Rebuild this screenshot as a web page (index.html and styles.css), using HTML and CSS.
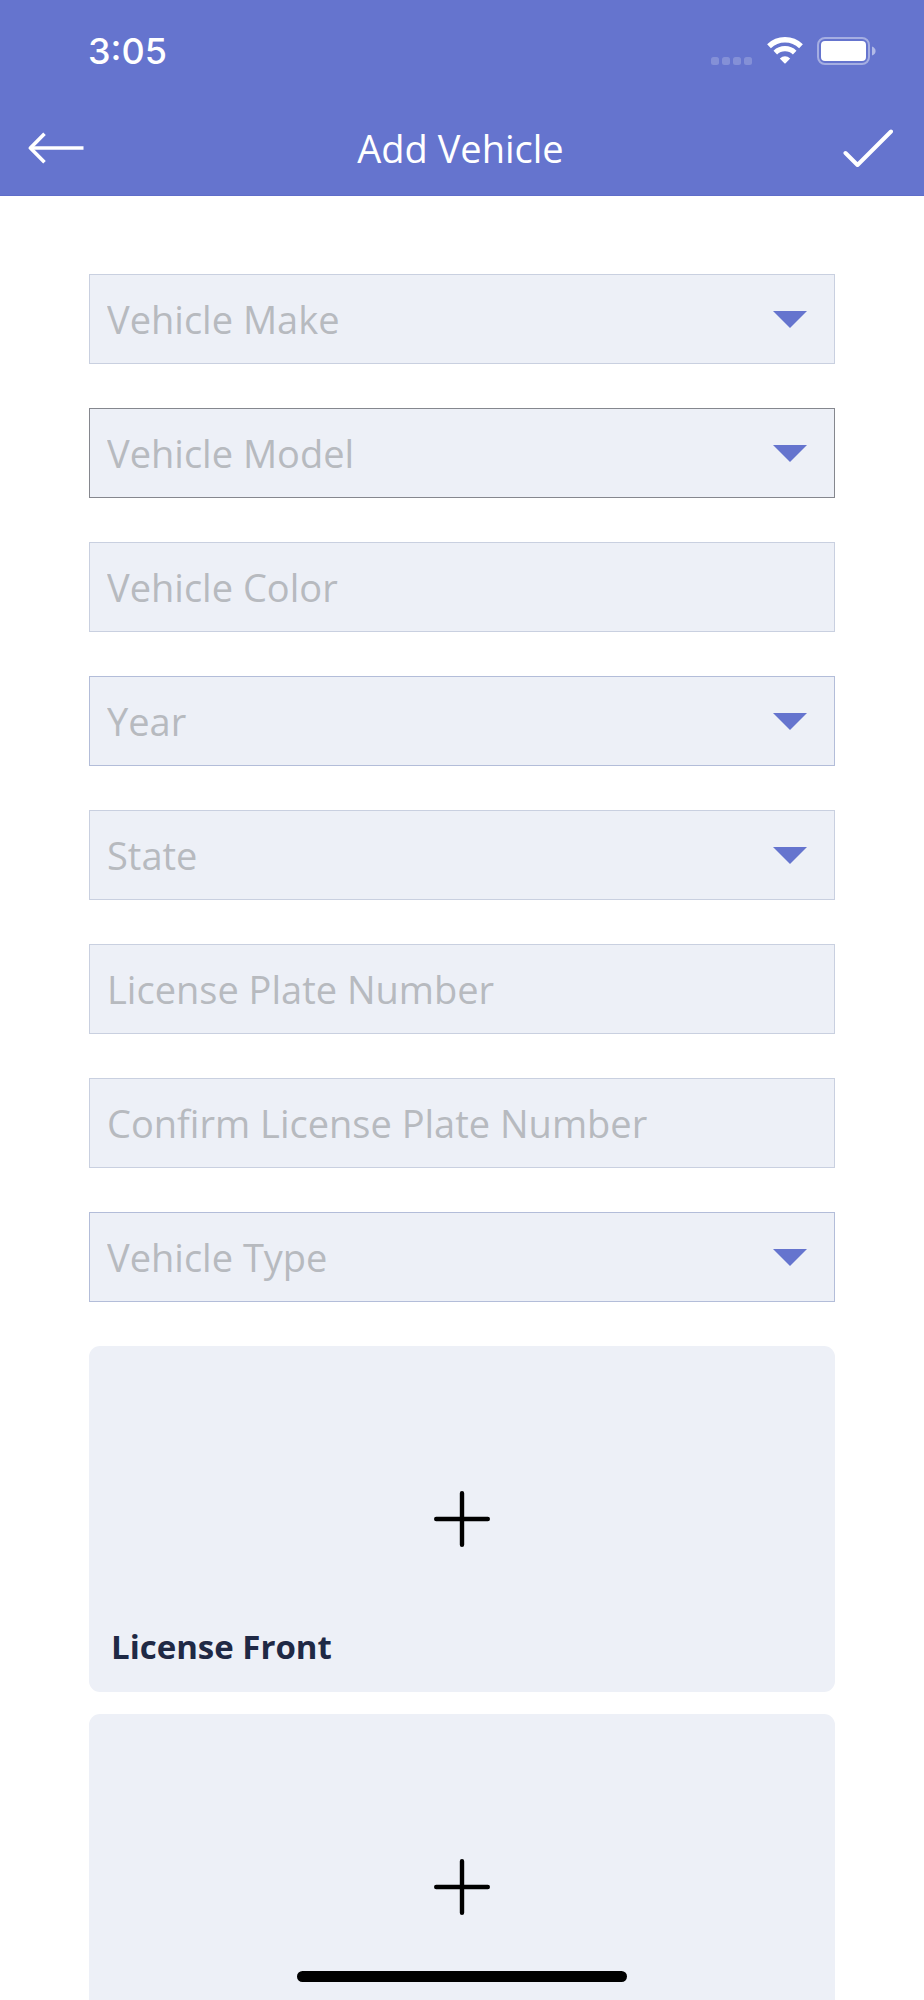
FILE: index.html
```
<!DOCTYPE html>
<html lang="en">
<head>
  <meta charset="UTF-8">
  <meta name="viewport" content="width=device-width, initial-scale=1.0">
  <title>Add Vehicle</title>
  <link rel="stylesheet" href="styles.css">
</head>
<body>

  <header class="header">
    <!-- Status bar -->
    <div class="status-bar">
      <span class="time">3:05</span>
      <div class="status-icons">
        <svg class="signal" width="42" height="8" viewBox="0 0 42 8" fill="#fff">
          <rect x="0" y="0" width="8" height="8" rx="2.5"/>
          <rect x="11" y="0" width="8" height="8" rx="2.5"/>
          <rect x="22" y="0" width="8" height="8" rx="2.5"/>
          <rect x="33" y="0" width="8" height="8" rx="2.5"/>
        </svg>
        <svg class="wifi" width="36" height="27" viewBox="0 0 36 27">
          <path d="M2 9.2 A23 23 0 0 1 34 9.2" fill="none" stroke="#fff" stroke-width="5.4"/>
          <path d="M8.3 15.6 A14 14 0 0 1 27.7 15.6" fill="none" stroke="#fff" stroke-width="5.2"/>
          <path d="M12.8 21.6 Q18 16.8 23.2 21.6 L18.6 26.2 Q18 26.8 17.4 26.2 Z" fill="#fff"/>
        </svg>
        <svg class="battery" width="59" height="28" viewBox="0 0 59 28">
          <rect x="1" y="1" width="51" height="26" rx="7" fill="none" stroke="#fff" stroke-opacity=".42" stroke-width="2"/>
          <rect x="4" y="4" width="45" height="20" rx="4" fill="#fff"/>
          <path d="M55 9.5 Q58.6 11 58.6 14 T55 18.5 Z" fill="#fff" fill-opacity=".5"/>
        </svg>
      </div>
    </div>

    <!-- Navigation bar -->
    <div class="nav-bar">
      <button class="nav-button" type="button" aria-label="Back">
        <svg width="56" height="32" viewBox="0 0 56 32" fill="none" stroke="#fff" stroke-width="3.6">
          <path d="M55.5 16 H3"/>
          <path d="M16.5 1.7 L2.4 16 L16.5 30.3" stroke-linejoin="round"/>
        </svg>
      </button>
      <h1 class="title">Add Vehicle</h1>
      <button class="nav-button" type="submit" form="vehicleForm" aria-label="Save">
        <svg width="50" height="38" viewBox="0 0 50 38" fill="none" stroke="#fff" stroke-width="4" stroke-linecap="round" stroke-linejoin="round">
          <path d="M2.5 24 L14.5 36 L48 2.5"/>
        </svg>
      </button>
    </div>
  </header>

  <form class="form" id="vehicleForm">
    <div class="fields">
      <div class="field">
        <select class="control" id="make" aria-label="Vehicle Make"><option>Vehicle Make</option></select>
        <span class="caret"></span>
      </div>
      <div class="field">
        <select class="control control-dark" id="model" aria-label="Vehicle Model"><option>Vehicle Model</option></select>
        <span class="caret"></span>
      </div>
      <div class="field">
        <input class="control" type="text" id="color" placeholder="Vehicle Color" aria-label="Vehicle Color">
      </div>
      <div class="field">
        <select class="control control-blue" id="year" aria-label="Year"><option>Year</option></select>
        <span class="caret"></span>
      </div>
      <div class="field">
        <select class="control" id="state" aria-label="State"><option>State</option></select>
        <span class="caret"></span>
      </div>
      <div class="field">
        <input class="control" type="text" id="plate" placeholder="License Plate Number" aria-label="License Plate Number">
      </div>
      <div class="field">
        <input class="control" type="text" id="confirmPlate" placeholder="Confirm License Plate Number" aria-label="Confirm License Plate Number">
      </div>
      <div class="field">
        <select class="control control-blue" id="type" aria-label="Vehicle Type"><option>Vehicle Type</option></select>
        <span class="caret"></span>
      </div>
    </div>

    <!-- Photo uploads -->
    <div class="uploads">
      <button class="upload" type="button">
        <svg class="plus" width="56" height="56" viewBox="0 0 56 56" stroke="#000" stroke-width="4.4" stroke-linecap="round">
          <path d="M28 2.2 V53.8 M2.2 28 H53.8"/>
        </svg>
        <span class="upload-label">License Front</span>
      </button>
      <button class="upload" type="button" aria-label="Add photo">
        <svg class="plus" width="56" height="56" viewBox="0 0 56 56" stroke="#000" stroke-width="4.4" stroke-linecap="round">
          <path d="M28 2.2 V53.8 M2.2 28 H53.8"/>
        </svg>
      </button>
    </div>
  </form>

  <div class="home-indicator"></div>

</body>
</html>
```
FILE: styles.css
```
* {
  box-sizing: border-box;
}
body {
  margin: 0;
  height: 100vh;
  overflow: hidden;
  background: #fff;
  font-family: "Open Sans", sans-serif;
}
button {
  padding: 0;
  border: 0;
  background: none;
  font: inherit;
  cursor: pointer;
}
svg {
  display: block;
}

/* Header */
.header {
  background: #6574ce;
  color: #fff;
  border-bottom: 1px solid #5f6dc9;
}
.status-bar {
  display: flex;
  justify-content: space-between;
  align-items: center;
  height: 101px;
  padding: 0 48px 0 88px;
}
.time {
  font-family: Inter, sans-serif;
  font-size: 36px;
  font-weight: 500;
  line-height: 44px;
}
.status-icons {
  display: flex;
  align-items: center;
  gap: 14px;
}
.signal {
  align-self: flex-end;
  opacity: .2;
}
.nav-bar {
  display: grid;
  grid-template-columns: 1fr auto 1fr;
  align-items: center;
  height: 94px;
  padding: 0 31px 0 28px;
}
.nav-button:last-child {
  justify-self: end;
}
.nav-button:first-child {
  justify-self: start;
}
.title {
  margin: 0;
  font-size: 38px;
  font-weight: 400;
  line-height: 52px;
}

/* Form */
.form {
  padding: 78px 89px 0;
}
.fields {
  display: grid;
  gap: 44px;
}
.field {
  display: grid;
  align-items: center;
}
.control {
  grid-area: 1 / 1;
  width: 100%;
  height: 90px;
  padding: 0 17px;
  border: 1px solid #c9d0e0;
  border-radius: 0;
  background: #edf0f7;
  color: #b7babf;
  font: 400 38px "Open Sans", sans-serif;
  appearance: none;
  outline: none;
}
.control::placeholder {
  color: #b7babf;
  opacity: 1;
}
.control-dark {
  border-color: #85878e;
}
.control-blue {
  border-color: #b3bdd9;
}
.caret {
  grid-area: 1 / 1;
  justify-self: end;
  margin-right: 28px;
  border: 17px solid transparent;
  border-top-color: #6574ce;
  border-bottom: 0;
  pointer-events: none;
}

/* Uploads */
.uploads {
  display: grid;
  gap: 22px;
  margin-top: 44px;
}
.upload {
  display: grid;
  height: 346px;
  padding: 22px;
  border-radius: 11px;
  background: #edf0f7;
}
.plus {
  grid-area: 1 / 1;
  place-self: center;
}
.upload-label {
  grid-area: 1 / 1;
  place-self: end start;
  color: #1f2945;
  font-size: 33px;
  font-weight: 700;
  line-height: 46px;
}

.home-indicator {
  position: fixed;
  bottom: 18px;
  left: 50%;
  width: 330px;
  height: 11px;
  margin-left: -165px;
  border-radius: 6px;
  background: #000;
}
```
